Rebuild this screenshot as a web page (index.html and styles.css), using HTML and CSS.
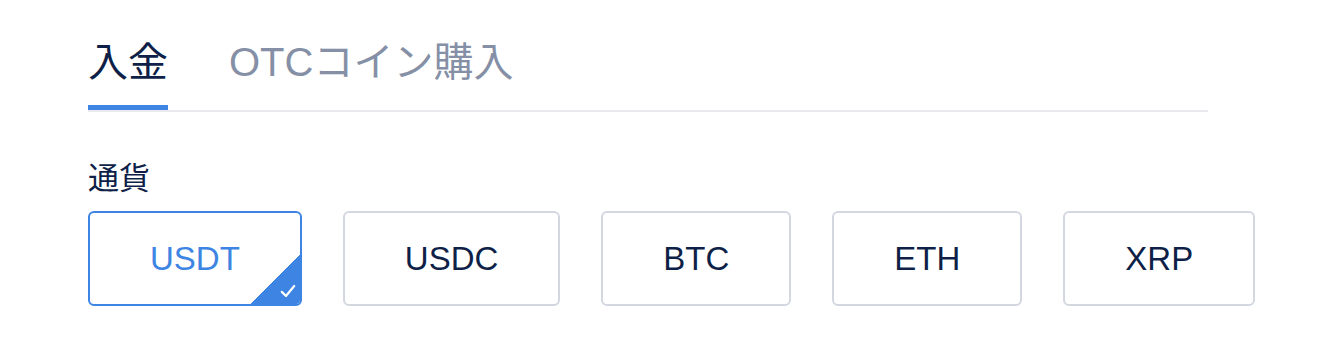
FILE: index.html
```html
<!DOCTYPE html>
<html lang="ja">
<head>
  <meta charset="UTF-8">
  <meta name="viewport" content="width=device-width, initial-scale=1.0">
  <title>入金</title>
  <link rel="stylesheet" href="styles.css">
</head>
<body>

  <div id="deposit-panel">
    <div class="tabs">
      <div class="tab active">入金</div>
      <div class="tab">OTCコイン購入</div>
    </div>

    <div class="field-label">通貨</div>

    <div class="coin-list">
      <div class="coin selected">
        USDT
        <span class="corner-check">
          <svg viewBox="0 0 16 16" width="18" height="18">
            <path d="M2.5 8.8 L6.2 12.4 L13.5 3.6" fill="none" stroke="#fff" stroke-width="2" stroke-linecap="round" stroke-linejoin="round"/>
          </svg>
        </span>
      </div>
      <div class="coin">USDC</div>
      <div class="coin">BTC</div>
      <div class="coin">ETH</div>
      <div class="coin">XRP</div>
    </div>
  </div>

</body>
</html>
```

FILE: styles.css
```css
:root {
  --text-color: #0e1f48;
  --muted-color: #8590a6;
  --accent: #3d84e3;
  --border-color: #d3d7e0;
  --line-color: #e8eaee;
}

* {
  margin: 0;
  padding: 0;
  box-sizing: border-box;
  font-family: 'Liberation Sans', 'Noto Sans CJK JP', sans-serif;
}

body {
  background: #fff;
  color: var(--text-color);
}

#deposit-panel {
  padding: 38px 0 0 88px;
}

.tabs {
  display: flex;
  width: 1120px;
  border-bottom: 2px solid var(--line-color);
}

.tab {
  font-size: 40px;
  line-height: 48px;
  padding-bottom: 19px;
  margin-right: 61px;
  color: var(--muted-color);
  border-bottom: 5px solid transparent;
}

.tab.active {
  color: var(--text-color);
  border-bottom-color: var(--accent);
}

.field-label {
  font-size: 31px;
  line-height: 40px;
  margin-top: 47px;
}

.coin-list {
  display: flex;
  gap: 41px;
  margin-top: 12px;
}

.coin {
  position: relative;
  display: flex;
  align-items: center;
  justify-content: center;
  height: 95px;
  padding: 0 60px;
  font-size: 33px;
  border: 2px solid var(--border-color);
  border-radius: 6px;
  overflow: hidden;
}

.coin.selected {
  color: var(--accent);
  border-color: var(--accent);
}

.corner-check {
  position: absolute;
  right: 0;
  bottom: 0;
  width: 49px;
  height: 49px;
  background: linear-gradient(to bottom right, transparent 50%, var(--accent) 50%);
}

.corner-check svg {
  position: absolute;
  right: 3px;
  bottom: 4px;
}
```
